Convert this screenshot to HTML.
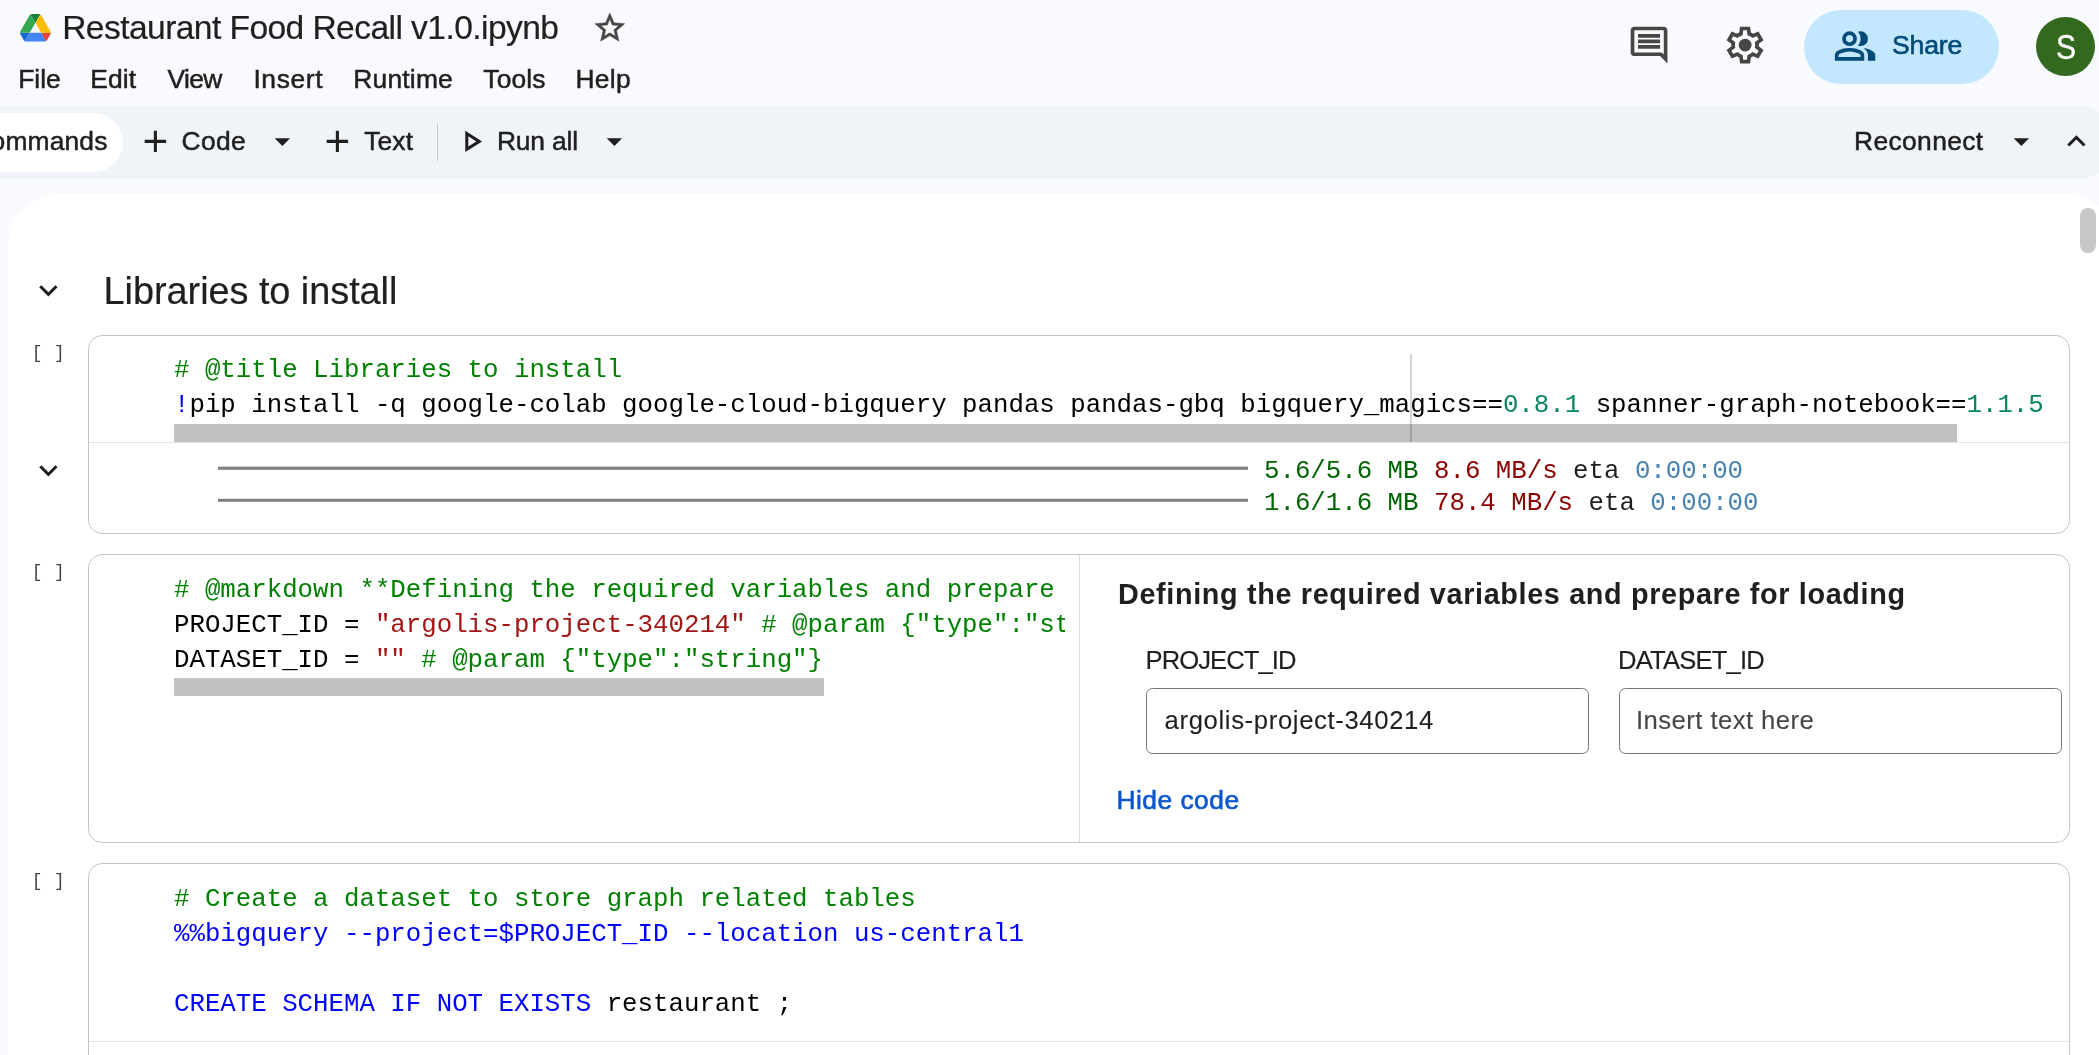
<!DOCTYPE html>
<html lang="en">
<head>
<meta charset="utf-8">
<title>Restaurant Food Recall v1.0.ipynb</title>
<style>
*{box-sizing:border-box;margin:0;padding:0}
html,body{width:2099px;height:1055px;overflow:hidden;background:#f8fafd}
body{will-change:transform;position:relative;font-family:"Liberation Sans",sans-serif;color:#1f1f1f}
.abs{position:absolute;white-space:pre;line-height:1}
.t{position:absolute;white-space:pre;line-height:40px;height:40px;display:block;-webkit-text-stroke:0.5px currentColor}
.ic{position:absolute;width:36.77px;height:36.77px;fill:#1f1f1f}
.ic2{position:absolute;width:44.13px;height:44.13px;fill:#444746}
.code{position:absolute;left:174px;white-space:pre;line-height:35px;height:35px;font-family:"Liberation Mono",monospace;font-size:25.755px;color:#000}
.c{color:#008000}.s{color:#a31515}.k{color:#0000ff}.n{color:#098658}
.g{color:#006400}.r{color:#8b0000}.b{color:#4682b4}
.out{line-height:32px;height:32px;color:#1f1f1f}
#toolbar{position:absolute;left:0;top:106px;width:2110px;height:73px;background:#f0f4f9;border-radius:0 29.4px 29.4px 0}
#panel{position:absolute;left:7.6px;top:194px;width:2109px;height:900px;background:#fff;border-radius:51.5px 51.5px 0 0}
.cell{position:absolute;left:88px;width:1982px;border:1px solid #c4c7c5;border-radius:14px;background:#fff}
.hsb{position:absolute;left:174px;height:18px;background:#c1c1c1}
.brk{position:absolute;left:31.8px;letter-spacing:0.45px;font-family:"Liberation Mono",monospace;font-size:17.8px;color:#444;white-space:pre;line-height:20px}
.inp{position:absolute;top:688px;width:443px;height:66px;border:1px solid #747775;border-radius:6.5px;background:#fff}
/*FIT-START*/
#title{left:62.20px;top:8px;font-size:33.6px;letter-spacing:-0.574px;}
#m1{left:18.30px;top:59px;font-size:26.4px;letter-spacing:-0.049px;}
#m2{left:90.20px;top:59px;font-size:26.4px;letter-spacing:0.119px;}
#m3{left:167.50px;top:59px;font-size:26.4px;letter-spacing:-0.622px;}
#m4{left:253.40px;top:59px;font-size:26.4px;letter-spacing:0.626px;}
#m5{left:353.30px;top:59px;font-size:26.4px;letter-spacing:0.201px;}
#m6{left:483.30px;top:59px;font-size:26.4px;letter-spacing:0.147px;}
#m7{left:575.50px;top:59px;font-size:26.4px;letter-spacing:0.300px;}
#tcmd{left:-28.66px;top:121px;font-size:26.4px;letter-spacing:0.160px;}
#tcode{left:181.50px;top:121px;font-size:26.4px;letter-spacing:0.362px;}
#ttext{left:364.20px;top:121px;font-size:26.4px;letter-spacing:0.144px;}
#trun{left:496.90px;top:121px;font-size:26.4px;letter-spacing:-0.164px;}
#trec{left:1854.00px;top:121px;font-size:26.4px;letter-spacing:0.371px;}
#share{left:1892.00px;top:25px;font-size:26.6px;letter-spacing:-0.169px;}
#h1{left:103.60px;top:271px;font-size:37.9px;letter-spacing:-0.054px;}
#ftitle{left:1118.00px;top:574px;font-size:28.8px;letter-spacing:0.647px;font-weight:bold;}
#l1{left:1145.60px;top:640px;font-size:25.6px;letter-spacing:-0.932px;}
#l2{left:1618.00px;top:640px;font-size:25.6px;letter-spacing:-0.820px;}
#v1{left:1164.60px;top:700px;font-size:25.7px;letter-spacing:0.623px;}
#v2{left:1636.00px;top:700px;font-size:25.7px;letter-spacing:0.430px;}
#hide{left:1116.40px;top:780px;font-size:26.4px;letter-spacing:0.480px;}
/*FIT-END*/
</style>
</head>
<body>
<!-- header -->
<svg class="abs" style="left:20.15px;top:14.3px" width="30.85" height="27.6" viewBox="0 0 87.3 78">
<path d="m6.6 66.85 3.85 6.65c.8 1.4 1.95 2.5 3.3 3.3l13.75-23.8h-27.5c0 1.55.4 3.1 1.2 4.5z" fill="#1967d2"/>
<path d="m43.65 25-13.75-23.8c-1.35.8-2.5 1.9-3.3 3.3l-25.4 44a9.06 9.06 0 0 0 -1.2 4.5h27.5z" fill="#34a853"/>
<path d="m73.55 76.8c1.35-.8 2.5-1.9 3.3-3.3l1.6-2.75 7.65-13.25c.8-1.4 1.2-2.95 1.2-4.5h-27.502l5.852 11.5z" fill="#ea4335"/>
<path d="m43.65 25 13.75-23.8c-1.35-.8-2.9-1.2-4.5-1.2h-18.5c-1.6 0-3.15.45-4.5 1.2z" fill="#188038"/>
<path d="m59.8 53h-32.3l-13.75 23.8c1.35.8 2.9 1.2 4.5 1.2h50.8c1.6 0 3.15-.45 4.5-1.2z" fill="#4285f4"/>
<path d="m73.4 26.500-12.700-22c-.8-1.400-1.950-2.500-3.300-3.300l-13.750 23.800 16.150 28h27.450c0-1.550-.4-3.100-1.200-4.500z" fill="#fbbc04"/>
</svg>
<span class="t" id="title" style="-webkit-text-stroke:0.2px currentColor">Restaurant Food Recall v1.0.ipynb</span>
<svg class="abs" style="left:592px;top:10px;fill:#444746;stroke:#444746;stroke-width:.35" width="35.6" height="35.6" viewBox="0 0 24 24"><path d="M22 9.24l-7.19-.62L12 2 9.19 8.63 2 9.24l5.46 4.73L5.82 21 12 17.27 18.18 21l-1.63-7.03L22 9.24zM12 15.4l-3.76 2.27 1-4.28-3.32-2.88 4.38-.38L12 6.1l1.71 4.04 4.38.38-3.32 2.88 1 4.28L12 15.4z"/></svg>

<span class="t" id="m1">File</span>
<span class="t" id="m2">Edit</span>
<span class="t" id="m3">View</span>
<span class="t" id="m4">Insert</span>
<span class="t" id="m5">Runtime</span>
<span class="t" id="m6">Tools</span>
<span class="t" id="m7">Help</span>

<!-- header right -->
<svg class="ic2" style="left:1627.3px;top:23.1px" viewBox="0 0 24 24"><path d="M21.99 4c0-1.1-.89-2-1.99-2H4c-1.1 0-2 .9-2 2v12c0 1.1.9 2 2 2h14l4 4-.01-18zM20 4v13.17L18.83 16H4V4h16zM6 12h12v2H6zm0-3h12v2H6zm0-3h12v2H6z"/></svg>
<svg class="ic2" style="left:1723px;top:22.9px" viewBox="0 -960 960 960"><path d="m370-80-16-128q-13-5-24.500-12T307-235l-119 50L78-375l103-78q-1-7-1-13.500v-27q0-6.500 1-13.500L78-585l110-190 119 50q11-8 23-15t24-12l16-128h220l16 128q13 5 24.500 12t22.500 15l119-50 110 190-103 78q1 7 1 13.500v27q0 6.500-2 13.500l103 78-110 190-118-50q-11 8-23 15t-24 12L590-80H370Zm70-80h79l14-106q31-8 57.500-23.500T639-327l99 41 39-68-86-65q5-14 7-29.500t2-31.500q0-16-2-31.500t-7-29.500l86-65-39-68-99 42q-22-23-48.500-38.500T533-694l-13-106h-79l-14 106q-31 8-57.500 23.500T321-633l-99-41-39 68 86 64q-5 15-7 30t-2 32q0 16 2 31t7 30l-86 65 39 68 99-42q22 23 48.500 38.500T427-266l13 106Zm42-180q58 0 99-41t41-99q0-58-41-99t-99-41q-59 0-99.500 41T342-480q0 58 40.500 99t99.500 41Z"/></svg>
<div class="abs" style="left:1804px;top:10px;width:195px;height:74px;border-radius:37px;background:#c2e7ff"></div>
<svg class="ic2" style="left:1833px;top:23.8px;fill:#004a77" viewBox="0 -960 960 960"><path d="M40-160v-112q0-34 17.500-62.500T104-378q62-31 126-46.500T360-440q66 0 130 15.500T616-378q29 15 46.500 43.500T680-272v112H40Zm720 0v-120q0-44-24.500-84.500T666-434q51 6 96 20.500t84 35.500q36 20 55 44.500t19 53.500v120H760ZM360-480q-66 0-113-47t-47-113q0-66 47-113t113-47q66 0 113 47t47 113q0 66-47 113t-113 47Zm400-160q0 66-47 113t-113 47q-11 0-28-2.500t-28-5.500q27-32 41.500-71t14.500-81q0-42-14.500-81T544-792q14-5 28-6.500t28-1.500q66 0 113 47t47 113ZM120-240h480v-32q0-11-5.500-20T580-306q-54-27-109-40.500T360-360q-56 0-111 13.500T140-306q-9 5-14.500 14t-5.500 20v32Zm240-320q33 0 56.500-23.500T440-640q0-33-23.500-56.500T360-720q-33 0-56.500 23.500T280-640q0 33 23.500 56.500T360-560Z"/></svg>
<span class="t" id="share" style="color:#004a77;-webkit-text-stroke:0.6px #004a77">Share</span>
<div class="abs" style="left:2035.9px;top:17px;width:58.8px;height:58.8px;border-radius:50%;background:#33691e"></div>
<span class="t" id="av" style="left:2036.1px;top:27px;width:60px;text-align:center;font-size:35px;color:#fff;transform:scaleX(.86);-webkit-text-stroke:0.3px #fff">S</span>

<!-- toolbar -->
<div id="toolbar"></div>
<div class="abs" style="left:-60px;top:113px;width:183px;height:59px;border-radius:29.5px;background:#fff"></div>
<span class="t" id="tcmd">Commands</span>
<svg class="ic" style="left:137.4px;top:123px" viewBox="0 0 24 24"><path d="M19 13h-6v6h-2v-6H5v-2h6V5h2v6h6v2z"/></svg>
<span class="t" id="tcode">Code</span>
<svg class="ic" style="left:264.1px;top:123px" viewBox="0 0 24 24"><path d="M7 10l5 5 5-5z"/></svg>
<svg class="ic" style="left:319.3px;top:123px" viewBox="0 0 24 24"><path d="M19 13h-6v6h-2v-6H5v-2h6V5h2v6h6v2z"/></svg>
<span class="t" id="ttext">Text</span>
<div class="abs" style="left:437px;top:124px;width:1px;height:37px;background:#c4c7c5"></div>
<svg class="ic" style="left:452.5px;top:123px" viewBox="0 0 24 24"><path d="M10 8.640L15.270 12 10 15.360V8.640M8 5v14l11-7L8 5z"/></svg>
<span class="t" id="trun">Run all</span>
<svg class="ic" style="left:596.1px;top:123px" viewBox="0 0 24 24"><path d="M7 10l5 5 5-5z"/></svg>
<span class="t" id="trec">Reconnect</span>
<svg class="ic" style="left:2002.7px;top:123px" viewBox="0 0 24 24"><path d="M7 10l5 5 5-5z"/></svg>
<svg class="ic" style="left:2057.9px;top:123.1px" viewBox="0 0 24 24"><path d="M12 8l-6 6 1.410 1.410L12 10.830l4.590 4.580L18 14z"/></svg>

<!-- main panel -->
<div id="panel"></div>
<div class="abs" style="left:2080px;top:208px;width:16px;height:45px;border-radius:8px;background:#c8c8c8"></div>
<svg class="ic" style="left:30.3px;top:271.6px" viewBox="0 0 24 24"><path d="M16.590 8.590L12 13.170 7.410 8.590 6 10l6 6 6-6z"/></svg>
<span class="t" id="h1" style="-webkit-text-stroke:0.2px currentColor">Libraries to install</span>

<!-- cell 1 -->
<div class="cell" style="top:335px;height:199px"></div>
<span class="brk" style="top:343px">[ ]</span>
<span class="code c" style="top:353px"># @title Libraries to install</span>
<span class="code" style="top:388px"><span class="k">!</span>pip install -q google-colab google-cloud-bigquery pandas pandas-gbq bigquery_magics==<span class="n">0.8.1</span> spanner-graph-notebook==<span class="n">1.1.5</span></span>
<div class="hsb" style="top:424px;width:1783px"></div>
<div class="abs" style="left:1410px;top:354px;width:2px;height:88px;background:rgba(0,0,0,.16)"></div>
<div class="abs" style="left:89px;top:442px;width:1980px;height:1px;background:#e3e3e3"></div>
<svg class="ic" style="left:30.3px;top:452px" viewBox="0 0 24 24"><path d="M16.590 8.590L12 13.170 7.410 8.590 6 10l6 6 6-6z"/></svg>
<div class="abs" style="left:218px;top:466px;width:1030px;height:4px;background:linear-gradient(to bottom,rgba(128,128,128,.35) 0 1px,#808080 1px 3px,rgba(128,128,128,.8) 3px 4px)"></div>
<div class="abs" style="left:218px;top:498px;width:1030px;height:4px;background:linear-gradient(to bottom,rgba(128,128,128,.25) 0 1px,#808080 1px 3px,rgba(128,128,128,.8) 3px 4px)"></div>
<span class="code out" style="left:1264px;top:456px"><span class="g">5.6/5.6 MB</span> <span class="r">8.6 MB/s</span> eta <span class="b">0:00:00</span></span>
<span class="code out" style="left:1264px;top:488px"><span class="g">1.6/1.6 MB</span> <span class="r">78.4 MB/s</span> eta <span class="b">0:00:00</span></span>

<!-- cell 2 -->
<div class="cell" style="top:554px;height:289px"></div>
<span class="brk" style="top:562px">[ ]</span>
<div class="abs" style="left:174px;top:573px;width:890.5px;height:105px;overflow:hidden">
<span class="code c" style="left:0;top:0"># @markdown **Defining the required variables and prepare for loading**</span>
<span class="code" style="left:0;top:35px">PROJECT_ID = <span class="s">"argolis-project-340214"</span><span class="c"> # @param {"type":"string"}</span></span>
<span class="code" style="left:0;top:70px">DATASET_ID = <span class="s">""</span><span class="c"> # @param {"type":"string"}</span></span>
</div>
<div class="hsb" style="top:678px;width:650px"></div>
<div class="abs" style="left:1079px;top:555px;width:1px;height:287px;background:#dadce0"></div>
<span class="t" id="ftitle" style="-webkit-text-stroke:0">Defining the required variables and prepare for loading</span>
<span class="t" id="l1" style="-webkit-text-stroke:0.15px currentColor">PROJECT_ID</span>
<span class="t" id="l2" style="-webkit-text-stroke:0.15px currentColor">DATASET_ID</span>
<div class="inp" style="left:1146px"></div>
<div class="inp" style="left:1619px"></div>
<span class="t" id="v1" style="-webkit-text-stroke:0.1px currentColor">argolis-project-340214</span>
<span class="t" id="v2" style="color:#444746;-webkit-text-stroke:0.1px currentColor">Insert text here</span>
<span class="t" id="hide" style="color:#0b57d0;-webkit-text-stroke:0.6px #0b57d0">Hide code</span>

<!-- cell 3 -->
<div class="cell" style="top:863px;height:300px"></div>
<span class="brk" style="top:871px">[ ]</span>
<span class="code c" style="top:882px"># Create a dataset to store graph related tables</span>
<span class="code k" style="top:917px">%%bigquery --project=$PROJECT_ID --location us-central1</span>
<span class="code" style="top:987px"><span class="k">CREATE SCHEMA IF NOT EXISTS</span> restaurant ;</span>
<div class="abs" style="left:89px;top:1041px;width:1980px;height:1px;background:#e3e3e3"></div>
</body>
</html>
